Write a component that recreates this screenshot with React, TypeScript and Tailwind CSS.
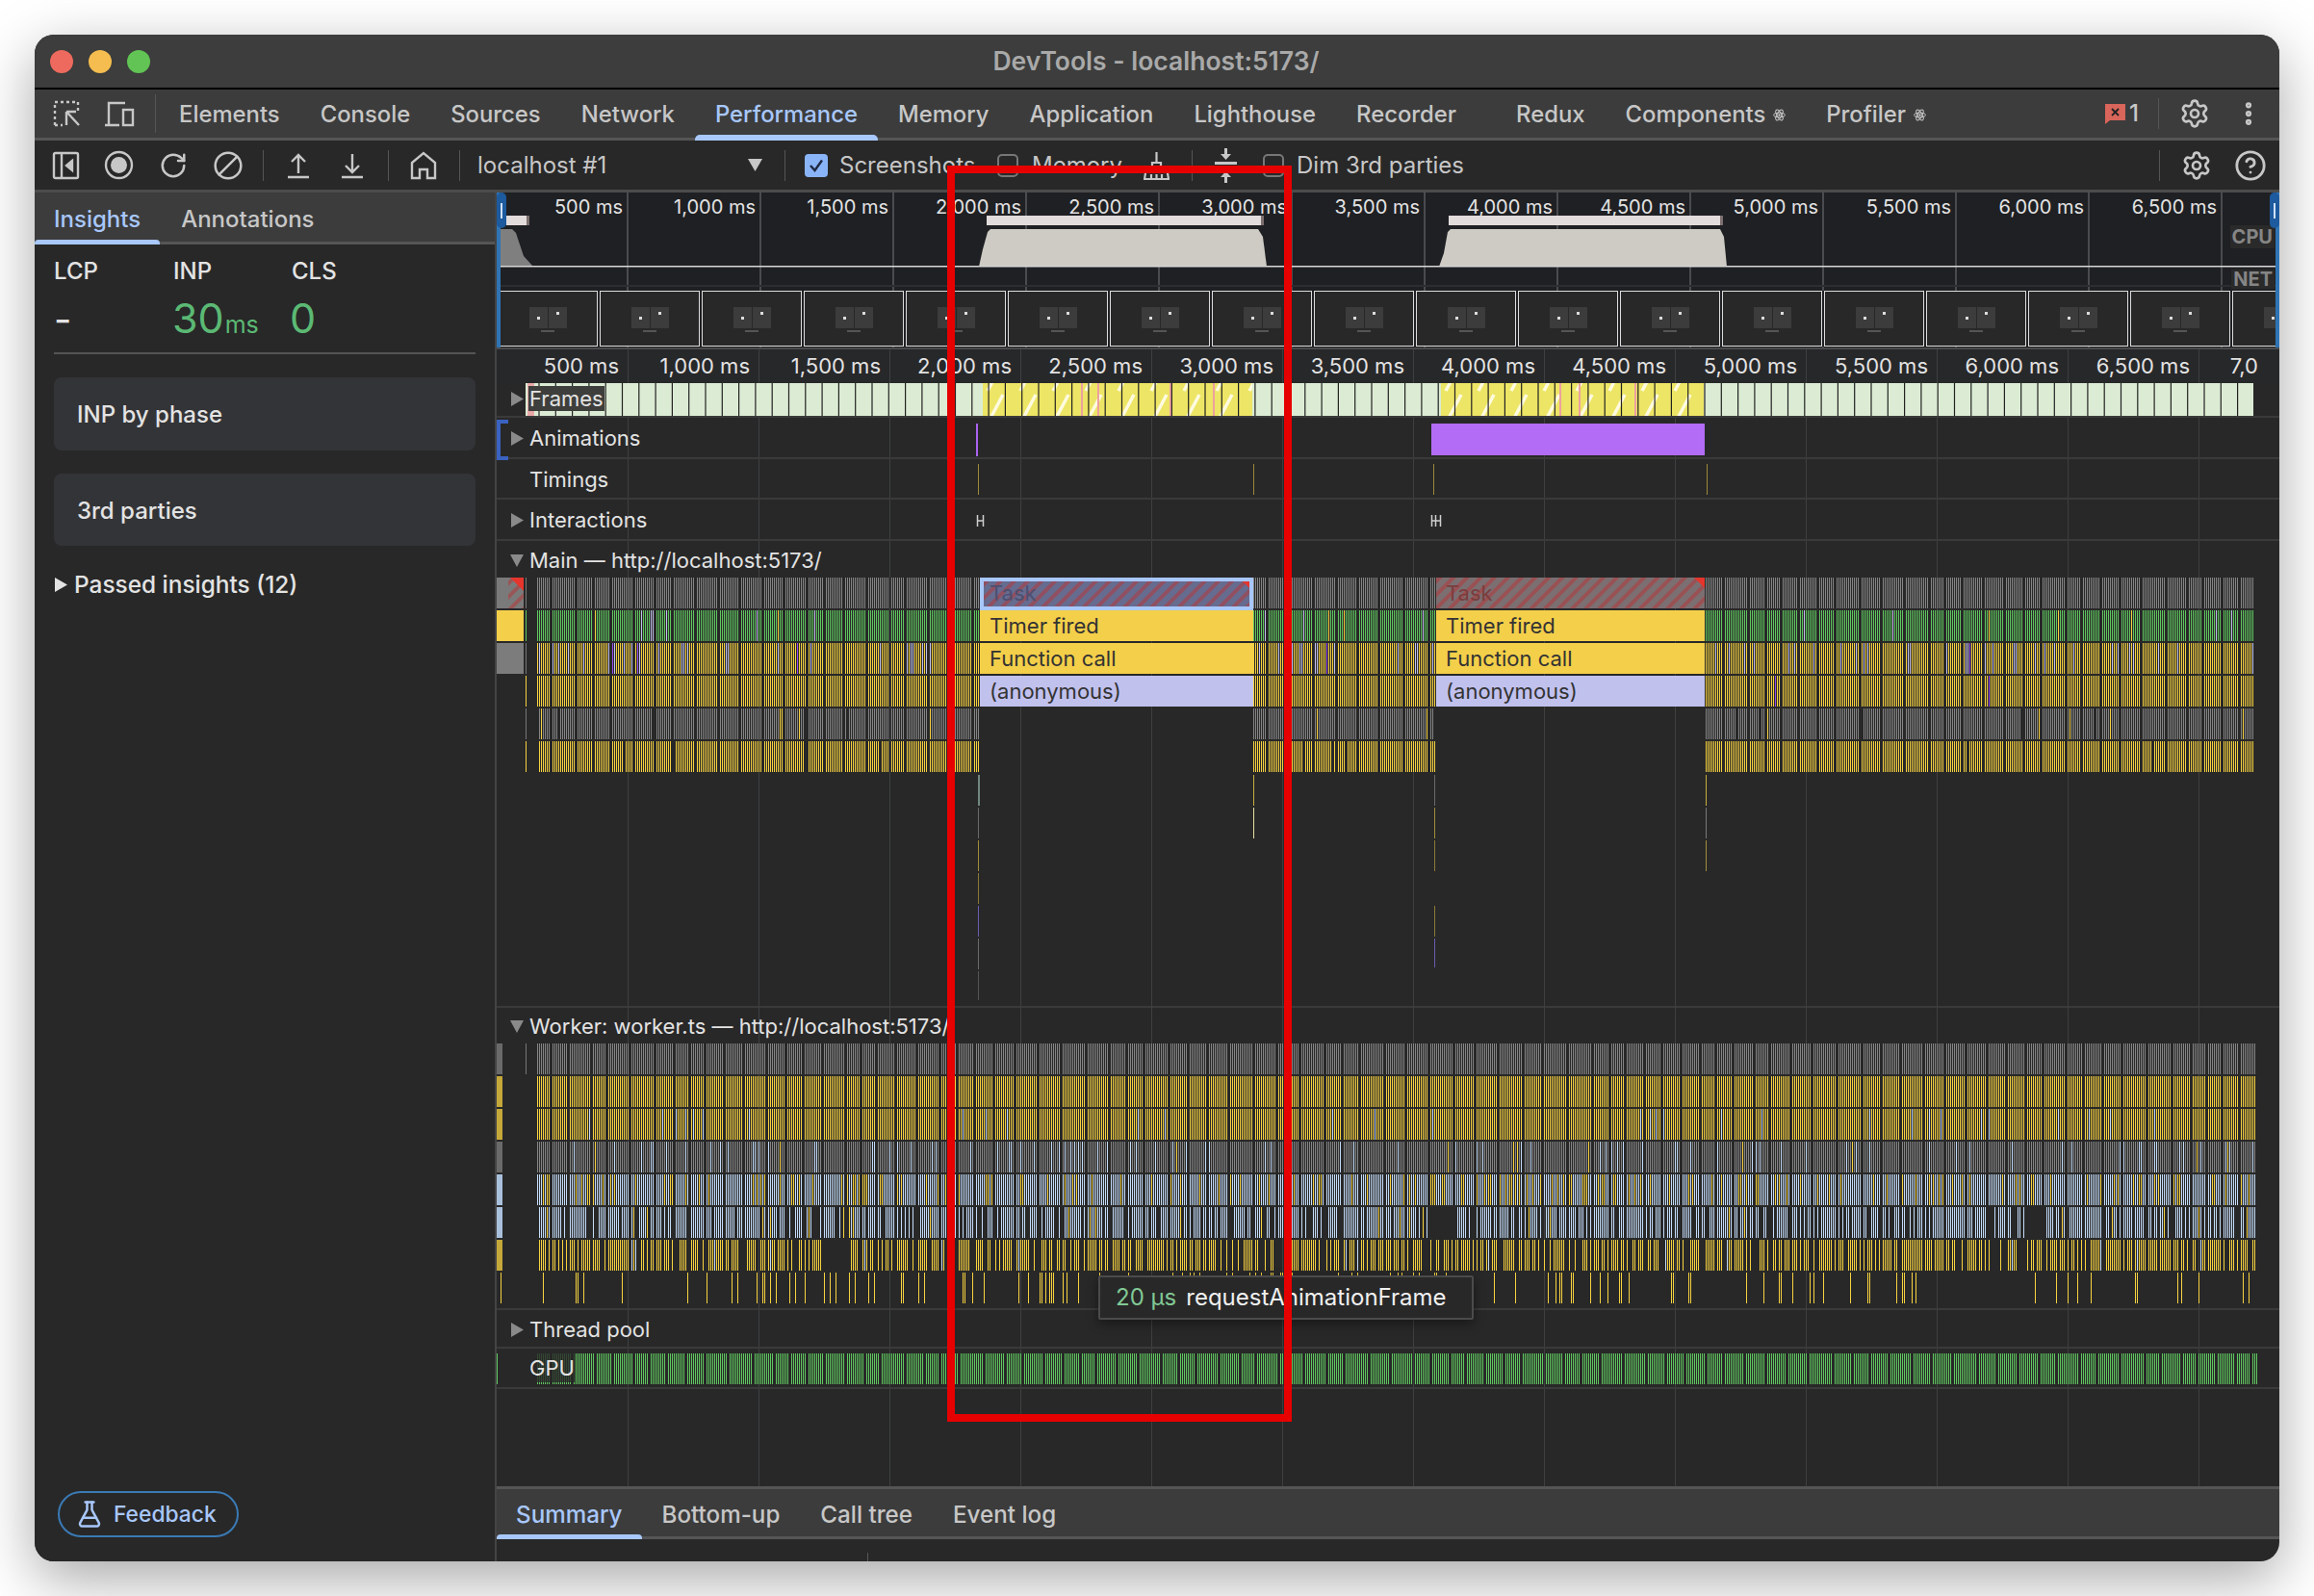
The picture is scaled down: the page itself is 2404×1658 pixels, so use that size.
import type { ReactNode } from "react";
import { Ban, CircleHelp, EllipsisVertical, FlaskConical, RotateCw, Settings } from "lucide-react";

type Palette = [string, number][];
type Span = [number, number];

// Small seeded random so the flame chart stays the same between runs
function makeRandom(seed: number) {
  let s = seed;
  return () => {
    s = (s * 16807) % 2147483647;
    return s / 2147483647;
  };
}

// All rows of one thread share the same frame columns
function makeFrames(seed: number, spans: Span[], gap = 2) {
  const rand = makeRandom(seed);
  const frames: Span[] = [];
  for (const [a, b] of spans) {
    let x = a;
    while (x < b) {
      const w = 14 + Math.floor(rand() * 6) * 2;
      frames.push([x, Math.min(x + w, b)]);
      x += w + gap;
      if (x % 2) x += 1;
    }
  }
  return frames;
}

const MAIN_FRAMES = makeFrames(7, [[558, 1017], [1302, 1491], [1772, 2342]]);
const WORKER_FRAMES = makeFrames(9, [[558, 2344]]);
const GPU_FRAMES = makeFrames(5, [[558, 2345]], 1);

function stripes(seed: number, y: number, frames: Span[], palette: Palette, skip = 0, h = 32) {
  const rand = makeRandom(seed);
  const paths: Record<string, string> = {};
  const total = palette.reduce((sum, p) => sum + p[1], 0);
  frames.forEach(([a, b], i) => {
    // sparse rows lose whole frames now and then
    if (i > 0 && skip > 0.1 && rand() < skip * 0.08) return;
    for (let px = a; px < b; px += 2) {
      if (rand() < skip) continue;
      let r = rand() * total;
      let color = palette[0][0];
      for (const [c, weight] of palette) {
        r -= weight;
        if (r <= 0) {
          color = c;
          break;
        }
      }
      paths[color] = (paths[color] || "") + `M${px}.5 ${y}v${h}`;
    }
  });
  return Object.entries(paths).map(([color, d]) => <path key={color} d={d} stroke={color} strokeWidth={1} fill="none" />);
}

const GRAY = "#858585";
const YELLOW = "#f7d23f";
const GREEN = "#5fc85f";
const LAV = "#c3c3f0";
const BLUE = "#c4dcf9";
const PURPLE = "#9a4df0";

const OVERVIEW_LABELS = ["500 ms", "1,000 ms", "1,500 ms", "2,000 ms", "2,500 ms", "3,000 ms", "3,500 ms", "4,000 ms", "4,500 ms", "5,000 ms", "5,500 ms", "6,000 ms", "6,500 ms"];
const TABS = ["Elements", "Console", "Sources", "Network", "Performance", "Memory", "Application", "Lighthouse", "Recorder"];

function Tri({ open = false, className = "fill-[#8a8a8a]" }: { open?: boolean; className?: string }) {
  return (
    <svg width="14" height="15" viewBox="0 0 14 15" className={`shrink-0 ${className}`}>
      {open ? <path d="M0 1h14L7 14z" /> : <path d="M1 0l13 7.500L1 15z" />}
    </svg>
  );
}

function ReactGlyph() {
  return (
    <svg width="13" height="15" viewBox="0 0 13 15" fill="none" stroke="#c7c7c7" strokeWidth="1" className="shrink-0">
      <ellipse cx="6.500" cy="7.500" rx="6" ry="2.400" />
      <ellipse cx="6.500" cy="7.500" rx="6" ry="2.400" transform="rotate(60 6.500 7.500)" />
      <ellipse cx="6.500" cy="7.500" rx="6" ry="2.400" transform="rotate(120 6.500 7.500)" />
      <circle cx="6.500" cy="7.500" r="1.200" fill="#c7c7c7" stroke="none" />
    </svg>
  );
}

function Divider({ className = "" }: { className?: string }) {
  return <div className={`h-[32px] w-px shrink-0 bg-[#555] ${className}`} />;
}

function TrackRow({ label, arrow, open, h, border = true, children }: { label: string; arrow?: boolean; open?: boolean; h: string; border?: boolean; children?: ReactNode }) {
  return (
    <div className={`relative flex items-center ${h} ${border ? "border-b-2 border-[#3a3a3a]" : ""}`}>
      {children}
      <div className="relative flex items-center gap-[6px] pl-[14px] pt-[2px] text-[22px] text-[#e3e3e3]">
        {arrow ? <Tri open={open} /> : <span className="w-[14px]" />}
        <span>{label}</span>
      </div>
    </div>
  );
}

function Marks({ top, h, children }: { top: number; h: number; children: ReactNode }) {
  return (
    <svg className="absolute left-0 top-0" width="1852" height={h} viewBox={`516 ${top} 1852 ${h}`}>
      {children}
    </svg>
  );
}

function ThumbFrame() {
  return (
    <div className="flex h-[58px] w-[104px] shrink-0 flex-col items-center border border-[#dcdcdc] bg-[#282828] pt-[16px]">
      <div className="flex gap-px">
        <div className="flex h-[22px] w-[19px] items-center justify-center bg-[#3c3c3c]">
          <div className="h-[3px] w-[3px] bg-[#ddd]" />
        </div>
        <div className="flex h-[22px] w-[19px] items-start justify-center bg-[#3c3c3c] pt-[5px]">
          <div className="h-[3px] w-[3px] bg-[#ddd]" />
        </div>
      </div>
      <div className="mt-[2px] h-[2px] w-[14px] bg-[#555]" />
    </div>
  );
}

function Overview() {
  return (
    <div className="relative h-[163px] overflow-hidden border-b-2 border-[#4a4a4a] bg-[#1f2023]">
      <div className="absolute inset-0 flex">
        {OVERVIEW_LABELS.map((t, i) => (
          <div key={t} className={`h-full shrink-0 border-r-2 border-[#4a4b4e] pr-[4px] pt-[1px] text-right text-[20px] leading-[28px] text-[#e3e3e3] ${i === 0 ? "w-[137px]" : "w-[138px]"}`}>
            {t}
          </div>
        ))}
      </div>
      <svg className="relative" width="1852" height="96" viewBox="516 200 1852 96">
        <path d="M520 277V238h12l4 4 8 24 10 11z" fill="#7f7f7f" />
        <path d="M1017 277l4-18 5-18 3-3h278l5 8 4 31z" fill="#cdcbc4" />
        <path d="M1495 277l5-14 4-22 3-3h280l4 8 3 31z" fill="#cdcbc4" />
        <rect x="526" y="224" width="21" height="10" fill="#e3dcdc" />
        <rect x="547" y="224" width="3" height="10" fill="#7d6f6f" />
        <rect x="1025" y="224" width="285" height="10" fill="#e3dcdc" />
        <rect x="1310" y="224" width="3" height="10" fill="#7d6f6f" />
        <rect x="1505" y="224" width="282" height="10" fill="#e3dcdc" />
        <rect x="1787" y="224" width="3" height="10" fill="#7d6f6f" />
        <rect x="520" y="276" width="1844" height="1.500" fill="#d8d8d8" />
      </svg>
      <div className="relative h-[6px] border-t-2 border-[#2c2d30]" />
      <div className="relative flex gap-[2px] overflow-hidden bg-[#1f2023] pl-px">
        {Array.from({ length: 18 }).map((_, i) => (
          <ThumbFrame key={i} />
        ))}
      </div>
      <div className="absolute right-[5px] top-[34px] bg-[#2a2a2a] px-[2px] text-[20px] font-bold leading-[24px] text-[#858585]">CPU</div>
      <div className="absolute right-[5px] top-[80px] bg-[#2a2a2a] px-[2px] text-[20px] font-bold leading-[20px] text-[#858585]">NET</div>
      <div className="absolute inset-y-0 left-0 w-[4px] bg-[#2f74b5]" />
      <div className="absolute left-0 top-0 flex h-[37px] w-[10px] items-center justify-center rounded-[5px] bg-[#1d5a9e]">
        <div className="h-[16px] w-[2px] bg-[#cfe0f5]" />
      </div>
      <div className="absolute inset-y-0 right-0 w-[4px] bg-[#2f74b5]" />
      <div className="absolute right-0 top-0 flex h-[37px] w-[10px] items-center justify-center rounded-[5px] bg-[#1d5a9e]">
        <div className="h-[16px] w-[2px] bg-[#cfe0f5]" />
      </div>
    </div>
  );
}

function Frames() {
  const lines: string[] = [];
  for (let x = 560; x < 2341; x += 17.3) lines.push(`M${x.toFixed(1)} 398v34`);
  return (
    <div className="relative flex h-[36px] items-center border-b-2 border-[#3a3a3a] pb-[2px]">
      <Marks top={398} h={34}>
        <defs>
          <pattern id="frameHatch" width="34" height="34" patternUnits="userSpaceOnUse">
            <path d="M6 32L22 2" stroke="#fffbe0" strokeWidth="3.500" />
          </pattern>
        </defs>
        <rect x="546" y="398" width="1795" height="34" fill="#dcecd4" />
        <rect x="548" y="398" width="7" height="34" fill="#e9a8a8" />
        <rect x="1021" y="398" width="280" height="34" fill="#ede565" />
        <rect x="1021" y="398" width="280" height="34" fill="url(#frameHatch)" />
        <rect x="1497" y="398" width="273" height="34" fill="#ede565" />
        <rect x="1497" y="398" width="273" height="34" fill="url(#frameHatch)" />
        {[1123, 1140, 1215, 1260, 1620, 1640, 1698].map((x) => (
          <rect key={x} x={x} y="398" width="2" height="34" fill="#eda0a0" />
        ))}
        <path d={lines.join("")} stroke="#222" strokeWidth="1.200" />
      </Marks>
      <div className="relative ml-[14px] flex items-center gap-[5px]">
        <Tri />
        <span className="bg-[#3e3e3c] px-[1px] text-[22px] leading-[26px] text-[#e3e3e3]">Frames</span>
      </div>
    </div>
  );
}

function MainFlame() {
  const block = (x: number, w: number, selected: boolean) => (
    <g key={x}>
      {selected && <rect x={x} y="600" width={w} height="34" fill="#a8c7fa" />}
      <rect x={selected ? x + 4 : x} y={selected ? 604 : 600} width={selected ? w - 8 : w} height={selected ? 26 : 32} fill={selected ? "#666c90" : "#7b6f72"} />
      <rect x={selected ? x + 4 : x} y={selected ? 604 : 600} width={selected ? w - 8 : w} height={selected ? 26 : 32} fill="url(#taskHatch)" />
      <path d={`M${x + w - 11} ${selected ? 604 : 600}h${selected ? 7 : 11}v${selected ? 7 : 11}z`} fill="#e5352c" />
      <text x={x + 10} y="624" fontSize="22" fill={selected ? "#4d4f72" : "#7a3d3d"}>Task</text>
      <rect x={x} y="634" width={w} height="32" fill="#f3cf4a" />
      <text x={x + 10} y="658" fontSize="22" fill="#333">Timer fired</text>
      <rect x={x} y="668" width={w} height="32" fill="#f3cf4a" />
      <text x={x + 10} y="692" fontSize="22" fill="#333">Function call</text>
      <rect x={x} y="702" width={w} height="32" fill="#c1c1ee" />
      <text x={x + 10} y="726" fontSize="22" fill="#333">(anonymous)</text>
    </g>
  );
  return (
    <div className="relative h-[445px]">
      <Marks top={600} h={445}>
        <defs>
          <pattern id="taskHatch" width="10" height="10" patternUnits="userSpaceOnUse" patternTransform="rotate(45)">
            <rect width="4" height="10" fill="#b2383a" fillOpacity="0.55" />
          </pattern>
        </defs>
        <g shapeRendering="crispEdges">
          {stripes(11, 600, MAIN_FRAMES, [[GRAY, 10]], 0)}
          {stripes(12, 634, MAIN_FRAMES, [[GREEN, 40], [LAV, 1], [YELLOW, 0.4]], 0)}
          {stripes(13, 668, MAIN_FRAMES, [[YELLOW, 14], [LAV, 2], [PURPLE, 0.1]], 0)}
          {stripes(14, 702, MAIN_FRAMES, [[YELLOW, 60], [PURPLE, 0.6]], 0)}
          {stripes(15, 736, MAIN_FRAMES, [[GRAY, 40], [YELLOW, 1]], 0.02)}
          {stripes(16, 770, MAIN_FRAMES, [[YELLOW, 10]], 0.02)}
        </g>
        <rect x="516" y="600" width="28" height="32" fill="#7a7a7a" />
        <rect x="528" y="600" width="16" height="32" fill="url(#taskHatch)" />
        <path d="M530 600h14v14z" fill="#e5352c" />
        <rect x="516" y="634" width="28" height="32" fill="#f3cf4a" />
        <rect x="516" y="668" width="28" height="32" fill="#7c7c7c" />
        <path d="M546.500 600v32M546.500 668v32M546.500 736v32" stroke="#777" />
        <path d="M546.500 634v32" stroke={GREEN} />
        <path d="M546.500 702v32M546.500 770v32" stroke={YELLOW} />
        {block(1018, 284, true)}
        {block(1492, 279, false)}
        <path d="M1017 805v32" stroke="#b8e6d8" />
        <path d="M1016.500 839v32" stroke="#6a6a6a" />
        <path d="M1016.500 873v32" stroke="#a08e3a" />
        <path d="M1016.500 907v32" stroke="#8a7a36" />
        <path d="M1016.500 941v32" stroke="#6a5bb0" />
        <path d="M1016.500 975v32" stroke="#6a6a6a" />
        <path d="M1016.500 1009v30" stroke="#555" />
        <path d="M1302.500 805v32" stroke="#c8b040" />
        <path d="M1302.500 839v32" stroke="#e8e0a0" />
        <path d="M1490.500 805v32" stroke="#6a6a6a" />
        <path d="M1490.500 839v32" stroke="#a08e3a" />
        <path d="M1490.500 873v32" stroke="#8a7a36" />
        <path d="M1490.500 941v32" stroke="#8a7a36" />
        <path d="M1490.500 975v30" stroke="#6a5bb0" />
        <path d="M1772.500 805v32" stroke="#c8b040" />
        <path d="M1772.500 839v32" stroke="#7a7a7a" />
        <path d="M1772.500 873v32" stroke="#a08e3a" />
      </Marks>
    </div>
  );
}

function WorkerFlame() {
  return (
    <div className="relative h-[275px]">
      <Marks top={1084} h={275}>
        <g shapeRendering="crispEdges">
          {stripes(21, 1084, WORKER_FRAMES, [[GRAY, 10]], 0)}
          {stripes(22, 1118, WORKER_FRAMES, [[YELLOW, 10]], 0)}
          {stripes(23, 1152, WORKER_FRAMES, [[YELLOW, 40], [BLUE, 1.5]], 0)}
          {stripes(24, 1186, WORKER_FRAMES, [[GRAY, 30], [BLUE, 4], [YELLOW, 0.6]], 0)}
          {stripes(25, 1220, WORKER_FRAMES, [[BLUE, 12], [YELLOW, 2.5]], 0)}
          {stripes(26, 1254, WORKER_FRAMES, [[BLUE, 14], [YELLOW, 0.8]], 0.22)}
          {stripes(27, 1288, WORKER_FRAMES, [[YELLOW, 12], [BLUE, 0.2]], 0.3)}
          {stripes(28, 1322, WORKER_FRAMES, [[YELLOW, 10]], 0.82)}
        </g>
        <rect x="516" y="1084" width="6" height="32" fill="#6a6a6a" />
        <rect x="516" y="1118" width="6" height="32" fill="#c4a83a" />
        <rect x="516" y="1152" width="6" height="32" fill="#c4a83a" />
        <rect x="516" y="1186" width="6" height="32" fill="#6a6a6a" />
        <rect x="516" y="1220" width="6" height="32" fill="#a9c0dc" />
        <rect x="516" y="1254" width="6" height="32" fill="#a9c0dc" />
        <rect x="516" y="1288" width="6" height="32" fill="#c4a83a" />
        <path d="M520.500 1322v32" stroke={YELLOW} />
        <path d="M546.500 1084v32" stroke="#777" />
      </Marks>
    </div>
  );
}

function Tracks() {
  return (
    <div className="relative flex-1 overflow-hidden bg-[#282828]">
      <div className="absolute inset-0 flex">
        {Array.from({ length: 14 }).map((_, i) => (
          <div key={i} className={`h-full shrink-0 border-r border-[#3e3f41] ${i === 0 ? "w-[137px]" : "w-[136px]"}`} />
        ))}
      </div>
      <Frames />
      <TrackRow label="Animations" arrow h="h-[43px]">
        <Marks top={434} h={41}>
          <rect x="1014" y="440" width="2" height="34" fill="#a864f0" />
          <rect x="1487" y="440" width="284" height="33" fill="#b26cf5" />
        </Marks>
        <div className="absolute left-0 top-[2px] h-[42px] w-[12px] border-y-[4px] border-l-[4px] border-[#3a62c0]" />
      </TrackRow>
      <TrackRow label="Timings" h="h-[42px]">
        <Marks top={477} h={40}>
          <path d="M1016.500 482v32M1302.500 482v32M1489.500 482v32M1773.500 482v32" stroke="#9a8a3a" />
        </Marks>
      </TrackRow>
      <TrackRow label="Interactions" arrow h="h-[43px]">
        <Marks top={519} h={41}>
          <path d="M1015.500 535v12M1021.500 535v12M1015 541h7M1487.500 535v12M1491.500 535v12M1496.500 535v12M1487 541h10" stroke="#cfcfcf" strokeWidth="1.500" />
        </Marks>
      </TrackRow>
      <TrackRow label="Main — http://localhost:5173/" arrow open h="h-[38px]" border={false} />
      <MainFlame />
      <div className="border-t-2 border-[#3a3a3a]" />
      <TrackRow label="Worker: worker.ts — http://localhost:5173/" arrow open h="h-[37px]" border={false} />
      <WorkerFlame />
      <div className="border-t-2 border-[#3a3a3a]" />
      <TrackRow label="Thread pool" arrow h="h-[40px]" />
      <div className="relative flex h-[42px] items-center border-b-2 border-[#3a3a3a]">
        <Marks top={1401} h={40}>
          <g shapeRendering="crispEdges">{stripes(31, 1406, GPU_FRAMES, [[GREEN, 10]], 0)}</g>
          <path d="M516.500 1406v32" stroke={GREEN} />
        </Marks>
        <span className="relative ml-[33px] bg-[#282828]/80 px-px text-[22px] leading-[30px] text-[#e3e3e3]">GPU</span>
      </div>
      <div className="absolute left-[625px] top-[927px] flex h-[46px] items-center gap-[10px] rounded-[2px] border-2 border-[#4b4b4b] bg-[#282828] pl-[16px] pr-[26px] text-[24px] shadow-[0_4px_12px_rgba(0,0,0,0.4)]">
        <span className="text-[#81c995]">20 µs</span>
        <span className="text-[#f0f0f0]">requestAnimationFrame</span>
      </div>
    </div>
  );
}

function Checkbox({ on = false }: { on?: boolean }) {
  return on ? (
    <div className="flex h-[24px] w-[24px] shrink-0 items-center justify-center rounded-[4px] bg-[#8ab4f8]">
      <svg width="18" height="18" viewBox="0 0 18 18" fill="none">
        <path d="M3 9l4.500 5L15 3.500" stroke="#1f2a44" strokeWidth="2.400" />
      </svg>
    </div>
  ) : (
    <div className="h-[24px] w-[22px] shrink-0 rounded-[5px] border-2 border-[#777]" />
  );
}

function Sidebar() {
  return (
    <div className="flex w-[480px] shrink-0 flex-col border-r-2 border-[#444] bg-[#282828]">
      <div className="flex h-[54px] items-center border-b-[3px] border-[#555] bg-[#3c3c3c] pt-[5px] text-[24px] font-medium text-[#c7c7c7]">
        <div className="relative flex h-full items-center px-[20px] text-[#a8c7fa]">
          Insights
          <div className="absolute bottom-[-3px] left-0 right-0 h-[5px] rounded-t-[4px] bg-[#a8c7fa]" />
        </div>
        <div className="ml-[22px]">Annotations</div>
      </div>
      <div className="flex flex-col px-[20px]">
        <div className="mt-[13px] flex text-[24px] font-medium leading-[30px] text-[#e3e3e3]">
          <div className="w-[124px]">LCP</div>
          <div className="w-[123px]">INP</div>
          <div>CLS</div>
        </div>
        <div className="mt-[5px] flex h-[58px] items-baseline text-[#5bb974]">
          <div className="w-[124px] text-[40px] leading-[56px] text-[#e3e3e3]">-</div>
          <div className="-ml-px w-[124px] text-[43px] leading-[56px]">
            30<span className="ml-[1px] text-[25px]">ms</span>
          </div>
          <div className="-ml-[2px] text-[43px] leading-[56px]">0</div>
        </div>
        <div className="mt-[6px] h-[2px] bg-[#555]" />
        <div className="mt-[24px] flex h-[76px] items-center rounded-[8px] bg-[#333437] px-[24px] pt-[2px] text-[24px] font-medium text-[#e3e3e3]">INP by phase</div>
        <div className="mt-[24px] flex h-[75px] items-center rounded-[8px] bg-[#333437] px-[24px] pt-[2px] text-[24px] font-medium text-[#e3e3e3]">3rd parties</div>
        <div className="mt-[22px] flex items-center gap-[7px] text-[24.400px] font-medium text-[#e3e3e3]">
          <Tri className="fill-[#e3e3e3]" />
          Passed insights (12)
        </div>
      </div>
      <div className="mb-[25px] ml-[24px] mt-auto flex h-[48px] w-[188px] items-center gap-[10px] rounded-full border-2 border-[#3a7ab5] pl-[16px] text-[22.800px] font-medium text-[#a8c7fa]">
        <FlaskConical size={30} strokeWidth={2} />
        Feedback
      </div>
    </div>
  );
}

export default function App() {
  return (
    <div className="relative h-[1658px] w-[2404px] overflow-hidden bg-white p-[36px] [font-family:Inter,'Noto_Sans',sans-serif]">
      <div className="flex h-[1586px] w-[2332px] flex-col overflow-hidden rounded-[20px] bg-[#282828] shadow-[0_18px_60px_rgba(0,0,0,0.35)]">
        {/* title bar */}
        <div className="relative flex h-[57px] shrink-0 items-center justify-center border-b-2 border-black bg-[#3c3d3c]">
          <div className="absolute left-[16px] flex gap-[16px]">
            <div className="h-[24px] w-[24px] rounded-full bg-[#ee6a5f]" />
            <div className="h-[24px] w-[24px] rounded-full bg-[#f5bd4f]" />
            <div className="h-[24px] w-[24px] rounded-full bg-[#61c454]" />
          </div>
          <span className="mr-[2px] text-[26.500px] font-semibold text-[#a9a9a9]">DevTools - localhost:5173/</span>
        </div>

        {/* devtools tabs */}
        <div className="flex h-[53px] shrink-0 items-center border-b-[3px] border-[#555] bg-[#3c3c3c] text-[23.850px] font-medium text-[#c7c7c7]">
          <svg width="30" height="30" viewBox="0 0 30 30" fill="none" stroke="#c7c7c7" strokeWidth="2.400" className="ml-[18px] shrink-0">
            <path d="M3 27V3h24v9" strokeDasharray="3 3" />
            <path d="M3 27h8" strokeDasharray="3 3" />
            <path d="M15 13v14M15 13h10M15 13l13 14" />
          </svg>
          <svg width="32" height="30" viewBox="0 0 32 30" fill="none" stroke="#c7c7c7" strokeWidth="2.400" className="ml-[24px] shrink-0">
            <path d="M22 4H5v22M1 27h15" />
            <rect x="20" y="11" width="10" height="16" />
          </svg>
          <Divider className="ml-[21px] !h-[40px]" />
          <div className="flex h-full items-center pl-[3px] pt-[2px]">
            {TABS.map((t) =>
              t === "Performance" ? (
                <div key={t} className="relative flex h-full items-center px-[21px] text-[#a8c7fa]">
                  {t}
                  <div className="absolute bottom-[-3px] left-0 right-0 h-[6px] rounded-t-[5px] bg-[#a8c7fa]" />
                </div>
              ) : (
                <div key={t} className="flex h-full items-center px-[21px]">
                  {t}
                </div>
              )
            )}
            <div className="ml-[20px] flex h-full items-center px-[21px]">Redux</div>
            <div className="flex h-full items-center gap-[8px] px-[21px]">
              Components <ReactGlyph />
            </div>
            <div className="flex h-full items-center gap-[8px] px-[21px]">
              Profiler <ReactGlyph />
            </div>
          </div>
          <div className="ml-auto flex items-center">
            <svg width="21" height="21" viewBox="0 0 21 21" className="shrink-0">
              <path d="M0 0h21v17H5l-5 4z" fill="#d9655b" />
              <path d="M7 5l7 7M14 5l-7 7" stroke="#222" strokeWidth="1.800" />
            </svg>
            <span className="ml-[4px] text-[24px] text-[#c7c7c7]">1</span>
            <Divider className="ml-[20px]" />
            <Settings size={32} strokeWidth={2} className="ml-[21px]" />
            <EllipsisVertical size={30} strokeWidth={3} className="ml-[25px] mr-[17px]" />
          </div>
        </div>

        {/* performance toolbar */}
        <div className="flex h-[54px] shrink-0 items-center border-b-[3px] border-[#4c4c4c] bg-[#282828] text-[24px] text-[#c7c7c7]">
          <svg width="29" height="30" viewBox="0 0 29 30" fill="none" stroke="#c7c7c7" strokeWidth="2.400" className="ml-[18px] shrink-0">
            <rect x="2" y="2" width="25" height="26" rx="1.500" />
            <path d="M10 2v26" />
            <path d="M21 10l-6 5 6 5z" fill="#c7c7c7" />
          </svg>
          <svg width="31" height="31" viewBox="0 0 31 31" fill="none" stroke="#c7c7c7" strokeWidth="2.400" className="ml-[25px] shrink-0">
            <circle cx="15.500" cy="15.500" r="13.500" />
            <circle cx="15.500" cy="15.500" r="8.500" fill="#c7c7c7" stroke="none" />
          </svg>
          <RotateCw size={30} strokeWidth={2} className="ml-[26px] shrink-0" />
          <Ban size={32} strokeWidth={1.900} className="ml-[26px] shrink-0 -scale-x-100" />
          <Divider className="ml-[20px]" />
          <svg width="24" height="28" viewBox="0 0 24 28" fill="none" stroke="#c7c7c7" strokeWidth="2.400" className="ml-[24px] shrink-0">
            <path d="M12 22V3M5 10l7-7 7 7M1 26h22" />
          </svg>
          <svg width="24" height="28" viewBox="0 0 24 28" fill="none" stroke="#c7c7c7" strokeWidth="2.400" className="ml-[32px] shrink-0">
            <path d="M12 2v19M5 14l7 7 7-7M1 26h22" />
          </svg>
          <Divider className="ml-[25px]" />
          <svg width="28" height="30" viewBox="0 0 28 30" fill="none" stroke="#c7c7c7" strokeWidth="2.400" className="ml-[22px] shrink-0">
            <path d="M2 28V12L14 2l12 10v16h-8v-9h-8v9z" />
          </svg>
          <Divider className="ml-[23px]" />
          <div className="ml-[18px] w-[281px] shrink-0">localhost #1</div>
          <svg width="15" height="13" viewBox="0 0 15 13" className="shrink-0 fill-[#c7c7c7]">
            <path d="M0 0h15L7.500 13z" />
          </svg>
          <Divider className="ml-[23px]" />
          <div className="ml-[20px]">
            <Checkbox on />
          </div>
          <div className="ml-[12px] w-[164px] shrink-0 whitespace-nowrap">Screenshots</div>
          <Checkbox />
          <div className="ml-[14px] w-[91px] shrink-0">Memory</div>
          <svg width="27" height="30" viewBox="0 0 27 30" fill="none" stroke="#c7c7c7" strokeWidth="2.200" className="ml-[25px] shrink-0">
            <path d="M13.500 1v11M9 12h9v5H9zM3 17h21l2 12H1zM8 24v5M13.500 24v5M19 24v5" />
          </svg>
          <Divider className="ml-[23px]" />
          <svg width="27" height="36" viewBox="0 0 27 36" fill="#c7c7c7" className="ml-[21px] shrink-0">
            <path d="M12 0h3v6h4l-5.500 6L8 6h4zM2 14h23v3H2zM2 19h23v3H2zM8 30l5.500-6 5.500 6h-4v6h-3v-6z" />
          </svg>
          <div className="ml-[25px]">
            <Checkbox />
          </div>
          <div className="ml-[13px]">Dim 3rd parties</div>
          <Divider className="ml-auto" />
          <Settings size={32} strokeWidth={2} className="ml-[22px] shrink-0" />
          <CircleHelp size={34} strokeWidth={2} className="ml-[23px] mr-[13px] shrink-0" />
        </div>

        <div className="flex min-h-0 flex-1">
          <Sidebar />
          <div className="flex min-w-0 flex-1 flex-col">
            <Overview />
            {/* time ruler */}
            <div className="flex h-[35px] shrink-0 overflow-hidden bg-[#27282a] text-[22px] text-[#e3e3e3]">
              {OVERVIEW_LABELS.map((t, i) => (
                <div key={t} className={`flex h-full shrink-0 items-center justify-end whitespace-nowrap border-r border-[#3e3f41] pr-[9px] ${i === 0 ? "w-[137px]" : "w-[136px]"}`}>
                  {t}
                </div>
              ))}
              <div className="flex h-full w-[61px] shrink-0 items-center justify-end whitespace-nowrap">7,0</div>
            </div>
            <Tracks />
            {/* bottom tabs */}
            <div className="flex h-[55px] shrink-0 items-center border-y-[3px] border-[#555] bg-[#3c3c3c] pt-[5px] text-[24.200px] font-medium text-[#c7c7c7]">
              <div className="relative flex h-full items-center px-[20px] text-[#a8c7fa]">
                Summary
                <div className="absolute bottom-[-3px] left-0 right-0 h-[5px] rounded-t-[4px] bg-[#a8c7fa]" />
              </div>
              <div className="flex h-full items-center px-[21px]">Bottom-up</div>
              <div className="flex h-full items-center px-[21px]">Call tree</div>
              <div className="flex h-full items-center px-[21px]">Event log</div>
            </div>
            <div className="flex h-[23px] shrink-0 items-end pl-[385px]">
              <div className="h-[9px] w-px bg-[#555]" />
            </div>
          </div>
        </div>
      </div>
      {/* red highlight drawn over the screenshot */}
      <div className="absolute left-[984px] top-[172px] h-[1305px] w-[358px] border-[8px] border-[#e60000]" />
    </div>
  );
}
